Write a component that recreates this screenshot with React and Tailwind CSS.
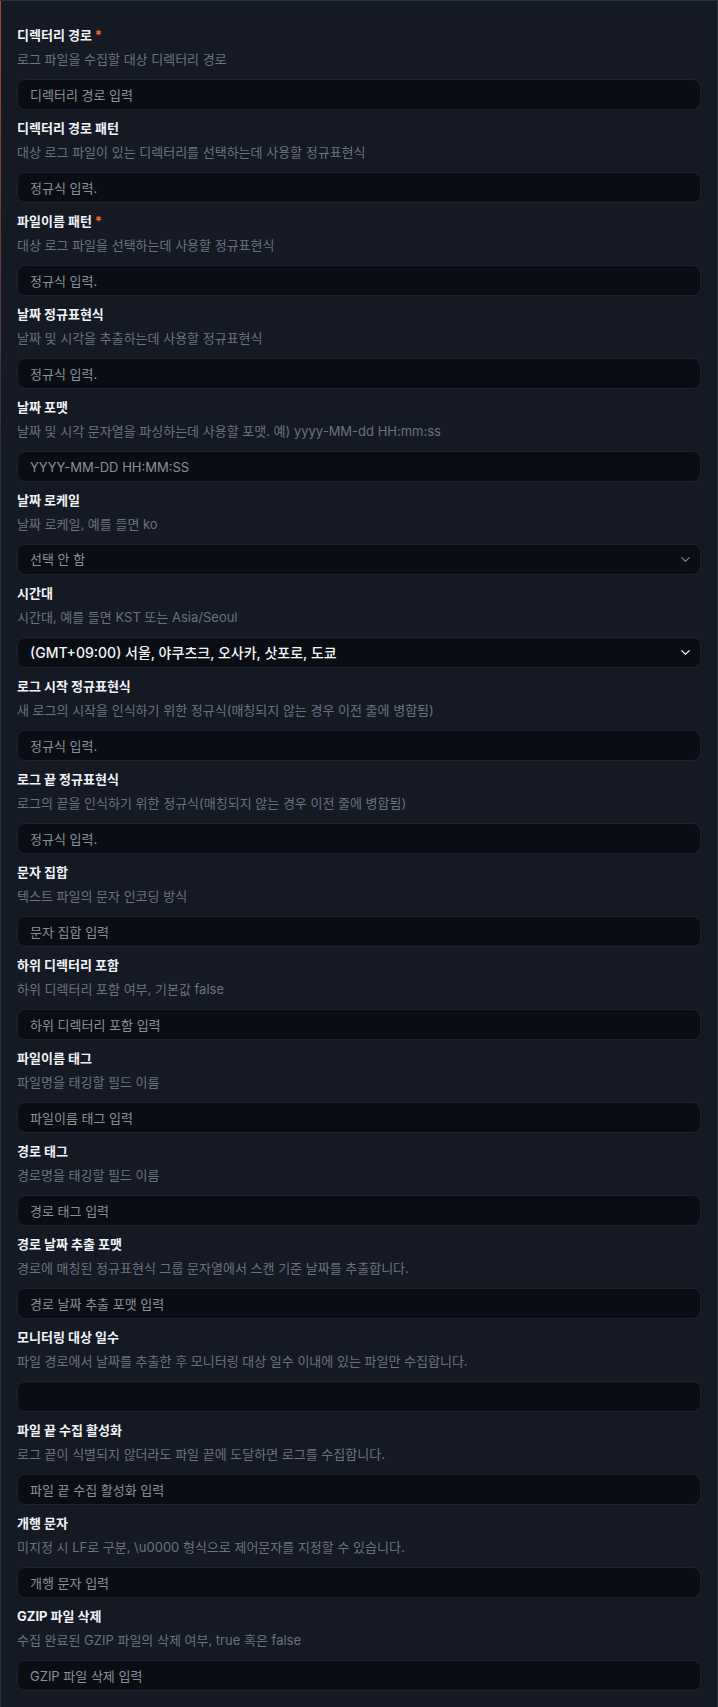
import { ChevronDown } from 'lucide-react'

const fields = [
  { label: '디렉터리 경로', required: true, desc: '로그 파일을 수집할 대상 디렉터리 경로', placeholder: '디렉터리 경로 입력' },
  { label: '디렉터리 경로 패턴', desc: '대상 로그 파일이 있는 디렉터리를 선택하는데 사용할 정규표현식', placeholder: '정규식 입력.' },
  { label: '파일이름 패턴', required: true, desc: '대상 로그 파일을 선택하는데 사용할 정규표현식', placeholder: '정규식 입력.' },
  { label: '날짜 정규표현식', desc: '날짜 및 시각을 추출하는데 사용할 정규표현식', placeholder: '정규식 입력.' },
  { label: '날짜 포맷', desc: '날짜 및 시각 문자열을 파싱하는데 사용할 포맷. 예) yyyy-MM-dd HH:mm:ss', placeholder: 'YYYY-MM-DD HH:MM:SS' },
  { label: '날짜 로케일', desc: '날짜 로케일, 예를 들면 ko', select: '선택 안 함' },
  { label: '시간대', desc: '시간대, 예를 들면 KST 또는 Asia/Seoul', select: '(GMT+09:00) 서울, 야쿠츠크, 오사카, 삿포로, 도쿄', selected: true },
  { label: '로그 시작 정규표현식', desc: '새 로그의 시작을 인식하기 위한 정규식(매칭되지 않는 경우 이전 줄에 병합됨)', placeholder: '정규식 입력.' },
  { label: '로그 끝 정규표현식', desc: '로그의 끝을 인식하기 위한 정규식(매칭되지 않는 경우 이전 줄에 병합됨)', placeholder: '정규식 입력.' },
  { label: '문자 집합', desc: '텍스트 파일의 문자 인코딩 방식', placeholder: '문자 집합 입력' },
  { label: '하위 디렉터리 포함', desc: '하위 디렉터리 포함 여부, 기본값 false', placeholder: '하위 디렉터리 포함 입력' },
  { label: '파일이름 태그', desc: '파일명을 태깅할 필드 이름', placeholder: '파일이름 태그 입력' },
  { label: '경로 태그', desc: '경로명을 태깅할 필드 이름', placeholder: '경로 태그 입력' },
  { label: '경로 날짜 추출 포맷', desc: '경로에 매칭된 정규표현식 그룹 문자열에서 스캔 기준 날짜를 추출합니다.', placeholder: '경로 날짜 추출 포맷 입력' },
  { label: '모니터링 대상 일수', desc: '파일 경로에서 날짜를 추출한 후 모니터링 대상 일수 이내에 있는 파일만 수집합니다.', placeholder: '' },
  { label: '파일 끝 수집 활성화', desc: '로그 끝이 식별되지 않더라도 파일 끝에 도달하면 로그를 수집합니다.', placeholder: '파일 끝 수집 활성화 입력' },
  { label: '개행 문자', desc: '미지정 시 LF로 구분, \\u0000 형식으로 제어문자를 지정할 수 있습니다.', placeholder: '개행 문자 입력' },
  { label: 'GZIP 파일 삭제', desc: '수집 완료된 GZIP 파일의 삭제 여부, true 혹은 false', placeholder: 'GZIP 파일 삭제 입력' },
]

function Field({ f }) {
  return (
    <div className="flex flex-col">
      <div className="h-5 leading-5 text-[13px] font-bold text-[#f1f3f6]">
        {f.label}
        {f.required && <span className="ml-[3px] text-[#f26a2e]">*</span>}
      </div>
      <div className="mt-1 h-5 leading-5 text-[13px] text-[#6b7280] whitespace-nowrap">{f.desc}</div>
      {f.select ? (
        <div className="mt-[10px] h-[31px] rounded-lg border border-[#1b2230] bg-[#0a0d14] pl-3 pr-[7px] flex items-center justify-between">
          {f.selected ? (
            <span className="text-[14px] font-medium text-[#f3f4f6]">{f.select}</span>
          ) : (
            <span className="text-[13px] text-[#8b909a]">{f.select}</span>
          )}
          <ChevronDown size={15} strokeWidth={2} className={f.selected ? 'text-white' : 'text-[#7c828d]'} />
        </div>
      ) : (
        <input
          type="text"
          placeholder={f.placeholder}
          className="mt-[10px] h-[31px] rounded-lg border border-[#1b2230] bg-[#0a0d14] px-3 text-[13px] text-[#e5e7eb] placeholder:text-[#8b909a] outline-none"
        />
      )}
    </div>
  )
}

export default function App() {
  return (
    <div className="w-[718px] bg-[#0f131b]" style={{ fontFamily: 'Inter, "Noto Sans CJK KR", sans-serif' }}>
      <div className="relative border-t border-x border-[#263043] bg-[#141924] px-4 pt-6 pb-4">
        <div className="absolute -left-px top-0 h-[460px] w-px bg-gradient-to-b from-[#a4473a] via-[#6a3a3a] to-[#263043]" />
        <div className="flex flex-col gap-2">
          {fields.map((f) => (
            <Field key={f.label} f={f} />
          ))}
        </div>
      </div>
    </div>
  )
}
